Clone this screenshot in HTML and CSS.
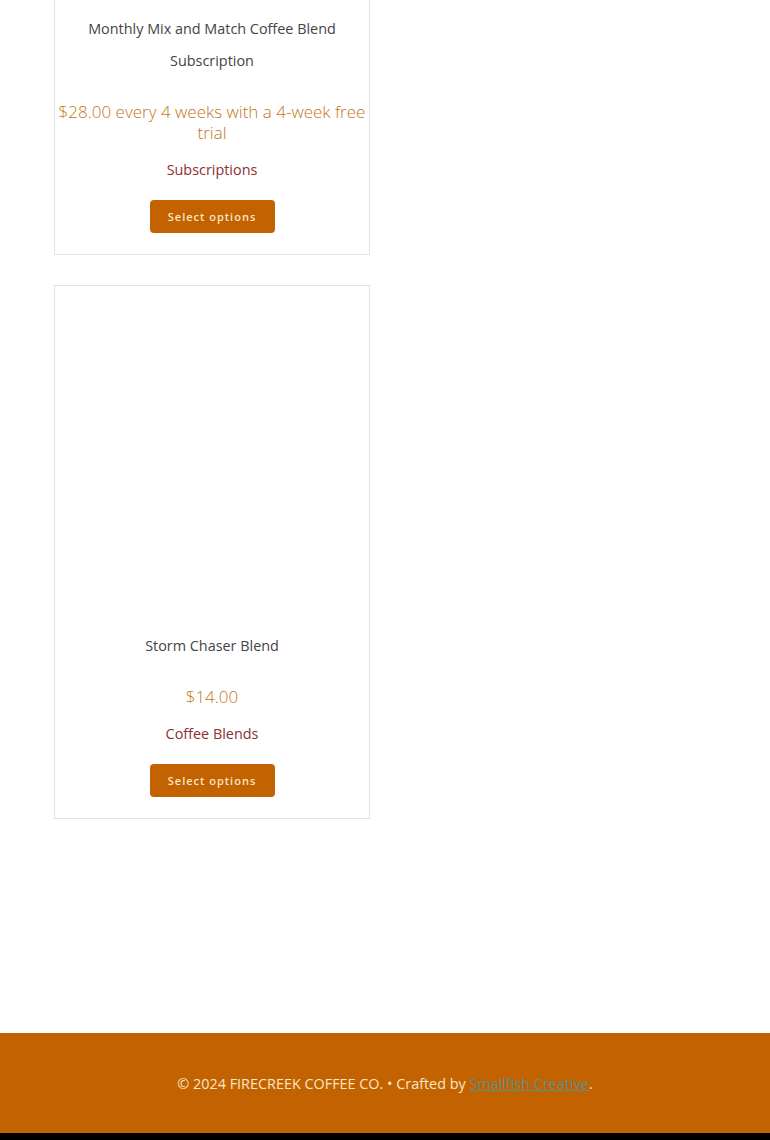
FILE: index.html
```html
<!DOCTYPE html>
<html lang="en">
<head>
<meta charset="utf-8">
<title>Shop</title>
<link rel="stylesheet" href="styles.css">
</head>
<body>
<main class="shop">
  <ul class="products">
    <li class="product">
      <div class="thumb"></div>
      <h2 class="title">Monthly Mix and Match Coffee Blend Subscription</h2>
      <p class="price">$28.00 every 4 weeks with a 4-week free trial</p>
      <a class="cat" href="#">Subscriptions</a>
      <a class="btn" href="#">Select options</a>
    </li>
    <li class="product">
      <div class="thumb"></div>
      <h2 class="title">Storm Chaser Blend</h2>
      <p class="price">$14.00</p>
      <a class="cat" href="#">Coffee Blends</a>
      <a class="btn" href="#">Select options</a>
    </li>
  </ul>
</main>
<footer class="footer">
  <p class="copy">© 2024 FIRECREEK COFFEE CO. • Crafted by <a href="#">Smallfish Creative</a>.</p>
</footer>
<div class="bottom-bar"></div>
</body>
</html>
```
FILE: styles.css
```css
html, body {
  margin: 0;
  padding: 0;
  background: #fff;
  font-family: "Open Sans", "Liberation Sans", sans-serif;
}
.shop {
  margin-top: -332px;
  padding: 0 0 214px 54px;
}
.products {
  list-style: none;
  margin: 0;
  padding: 0;
  display: flex;
  flex-direction: column;
  gap: 30px;
  width: 316px;
}
.product {
  border: 1px solid #e2e2e2;
  box-sizing: border-box;
  width: 316px;
  padding: 0 0 21px;
  display: flex;
  flex-direction: column;
  align-items: center;
  text-align: center;
}
.thumb {
  height: 344px;
  align-self: stretch;
}
.title {
  margin: 0;
  font-size: 14.4px;
  font-weight: 400;
  line-height: 32px;
  color: #444;
  padding: 0 20px;
}
.price {
  margin: 24px 0 0;
  font-size: 17px;
  font-weight: 300;
  line-height: 21px;
  color: #c4761a;
}
.cat {
  margin-top: 17px;
  font-size: 14.4px;
  line-height: 20px;
  color: #8c2f33;
  text-decoration: none;
}
.btn {
  margin-top: 20px;
  box-sizing: border-box;
  height: 33px;
  width: 125px;
  display: flex;
  align-items: center;
  justify-content: center;
  background: #c26200;
  border-radius: 4px;
  color: #fbe6c6;
  font-size: 11px;
  font-weight: 600;
  letter-spacing: 1px;
  text-decoration: none;
}
.footer {
  background: #c26200;
  height: 100px;
  display: flex;
  align-items: center;
  justify-content: center;
}
.copy {
  margin: 0;
  font-size: 14.4px;
  color: #fbe6c6;
}
.copy a {
  color: #5d8e8a;
}
.bottom-bar {
  height: 8px;
  background: #000;
}
```
